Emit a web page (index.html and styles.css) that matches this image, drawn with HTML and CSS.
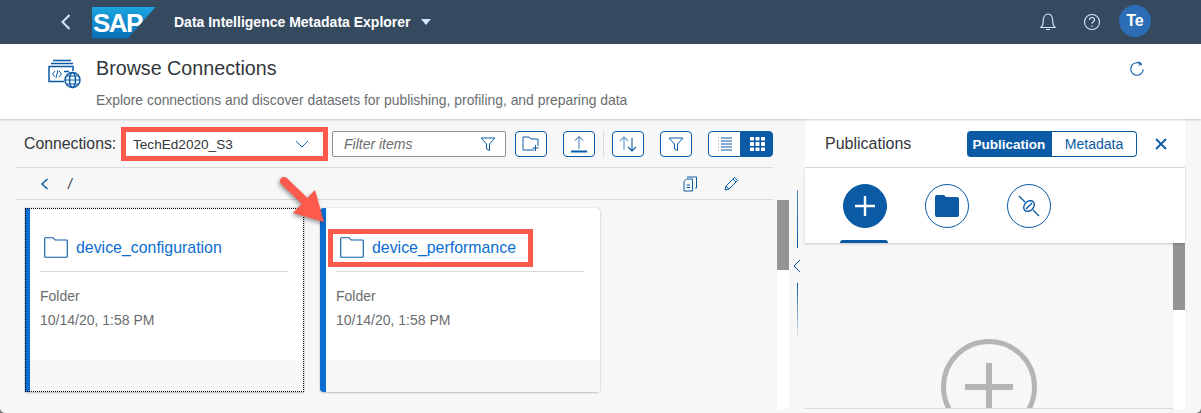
FILE: index.html
```html
<!DOCTYPE html>
<html lang="en">
<head>
  <meta charset="UTF-8" />
  <title>Browse Connections</title>
  <link rel="stylesheet" href="styles.css">
</head>
<body>
  <header class="shell">
    <svg class="back" width="12" height="18" viewBox="0 0 12 18"><path d="M9.500 2 2.500 9l7 7" fill="none" stroke="#d1e8ff" stroke-width="2"/></svg>
    <div class="logo">SAP</div>
    <div class="app-title">Data Intelligence Metadata Explorer</div>
    <span class="caret"></span>
    <div class="spacer"></div>
    <svg class="bell" width="18" height="20" viewBox="0 0 18 20"><path d="M2 15.500c1.800-1.600 2.200-3 2.200-5.500C4.200 6 5.500 2 9 2s4.800 4 4.800 8c0 2.500.4 3.900 2.200 5.500zM7.500 17.500h3" fill="none" stroke="#d1e8ff" stroke-width="1.200" stroke-linecap="round"/></svg>
    <svg class="help" width="18" height="18" viewBox="0 0 18 18"><circle cx="9" cy="9" r="7.500" fill="none" stroke="#d1e8ff" stroke-width="1.100"/><path d="M6.500 7c0-1.500 1.100-2.500 2.500-2.500s2.500 1 2.500 2.300c0 2-2.500 2-2.500 4" fill="none" stroke="#d1e8ff" stroke-width="1.200"/><circle cx="9" cy="13.300" r=".8" fill="#d1e8ff"/></svg>
    <div class="avatar">Te</div>
  </header>

  <section class="page-head">
    <svg class="page-icon" width="34" height="32" viewBox="0 0 34 32">
      <g fill="none" stroke="#0a5aa5" stroke-width="1.500">
        <path d="M5 1.500h18M3 4.500h22"/>
        <path d="M25 12v-4.500H1v15h15"/>
        <circle cx="24.500" cy="21" r="7.500" fill="#fff"/>
        <ellipse cx="24.500" cy="21" rx="3" ry="7.500"/>
        <path d="M17 21h15M18.500 17h12M18.500 25h12" stroke-width="1"/>
        <path d="M7 12l-2.500 3 2.500 3M11 12l2.500 3-2.500 3M10 11l-2 8" stroke-width="1"/>
        <path d="M16 12.500h5"/>
      </g>
    </svg>
    <div class="page-text">
      <h1>Browse Connections</h1>
      <p>Explore connections and discover datasets for publishing, profiling, and preparing data</p>
    </div>
    <svg class="refresh" width="16" height="17" viewBox="0 0 16 17"><path d="M12.500 4.500A6.300 6.300 0 1 0 14.300 9.500" fill="none" stroke="#0a5aa5" stroke-width="1.100"/><path d="M9.500 1.500 12.800 4.200 9.500 5.200" fill="none" stroke="#0a5aa5" stroke-width="1"/></svg>
  </section>

  <main class="workspace">
    <section class="browser">
      <div class="toolbar">
        <span class="conn-label">Connections:</span>
        <div class="conn-select">
          <span>TechEd2020_S3</span>
          <svg width="14" height="8" viewBox="0 0 14 8"><path d="M1 1l6 6 6-6" fill="none" stroke="#0a6ed1" stroke-width="1"/></svg>
        </div>
        <div class="filter-input">
          <span>Filter items</span>
          <svg width="16" height="15" viewBox="0 0 16 15"><path d="M1 1h14L9.500 7v6.500l-3-1.500V7z" fill="none" stroke="#0a5aa5" stroke-width="1"/></svg>
        </div>
        <button class="tool new-folder"><svg width="18" height="16" viewBox="0 0 18 16"><path d="M12 14H1V1h6l2 2h7v7M13.500 9v6M10.500 12h6" fill="none" stroke="#0a5aa5" stroke-width="1"/></svg></button>
        <button class="tool upload"><svg width="16" height="18" viewBox="0 0 16 18"><path d="M8 14V2" stroke="#7fa9d1" stroke-width="1.500"/><path d="M4 5.500 8 1.500l4 4" fill="none" stroke="#0a5aa5" stroke-width="1"/><path d="M0 16.500h16" stroke="#0a5aa5" stroke-width="2"/></svg></button>
        <span class="tool-sep"></span>
        <button class="tool"><svg width="20" height="18" viewBox="0 0 20 18"><path d="M6 15V2M2 6l4-4 4 4" fill="none" stroke="#7fa9d1" stroke-width="1.400"/><path d="M14 3v13M10 12l4 4 4-4" fill="none" stroke="#0a5aa5" stroke-width="1.100"/></svg></button>
        <button class="tool filter-btn"><svg width="16" height="15" viewBox="0 0 16 15"><path d="M1 1h14L9.500 7v6.500l-3-1.500V7z" fill="none" stroke="#0a5aa5" stroke-width="1"/></svg></button>
        <div class="view-toggle">
          <button class="view-btn"><svg width="14" height="14" viewBox="0 0 14 14"><path d="M3 1h11M3 4h11M3 7h11M3 10h11M3 13h11" stroke="#0a5aa5" stroke-width="1"/><path d="M0 1h1M0 4h1M0 7h1M0 10h1M0 13h1" stroke="#7fa9d1" stroke-width="1"/></svg></button>
          <button class="view-btn is-on"><svg width="15" height="14" viewBox="0 0 15 14" fill="#fff"><rect width="4" height="3.500" rx=".5"/><rect x="5.500" width="4" height="3.500" rx=".5"/><rect x="11" width="4" height="3.500" rx=".5"/><rect y="5" width="4" height="4" rx=".5"/><rect x="5.500" y="5" width="4" height="4" rx=".5"/><rect x="11" y="5" width="4" height="4" rx=".5"/><rect y="10.500" width="4" height="3.500" rx=".5"/><rect x="5.500" y="10.500" width="4" height="3.500" rx=".5"/><rect x="11" y="10.500" width="4" height="3.500" rx=".5"/></svg></button>
        </div>
      </div>

      <div class="crumbs">
        <svg class="crumb-back" width="9" height="12" viewBox="0 0 9 12"><path d="M7.500 1 2 6l5.500 5" fill="none" stroke="#0a5aa5" stroke-width="1.500"/></svg>
        <span class="crumb-path">/</span>
        <div class="spacer"></div>
        <svg class="crumb-copy" width="14" height="16" viewBox="0 0 14 16"><g fill="none" stroke="#0a5aa5" stroke-width="1"><path d="M1 5.500 3.500 3H9.500V15H1zM3.500 9h3.500M3.500 11.500h3.500"/><path d="M4 1h4.500M8.500 1h5v11h-1.500"/></g></svg>
        <svg class="crumb-edit" width="15" height="15" viewBox="0 0 15 15"><path d="M1 14l1-4L10.500 1.500l3 3L5 13zM2 10l3 3M9 3l3 3" fill="none" stroke="#0a5aa5" stroke-width="1"/></svg>
      </div>

      <div class="browser-body">
        <div class="cards">
          <article class="card is-focus">
            <div class="card-head">
              <svg class="folder" width="24" height="21" viewBox="0 0 24 21"><path d="M.7 19.500V1.500q0-.8.8-.8h7.500l2 2.300h11.500q.8 0 .8.8v15.700q0 .8-.8.8H1.500q-.8 0-.8-.8z" fill="none" stroke="#0a5aa5" stroke-width="1.100"/></svg>
              <a>device_configuration</a>
            </div>
            <div class="card-body">
              <div>Folder</div>
              <div>10/14/20, 1:58 PM</div>
            </div>
            <div class="card-foot"></div>
          </article>
          <article class="card">
            <div class="card-head">
              <span class="callout"></span>
              <svg class="folder" width="24" height="21" viewBox="0 0 24 21"><path d="M.7 19.500V1.500q0-.8.8-.8h7.500l2 2.300h11.500q.8 0 .8.8v15.700q0 .8-.8.8H1.500q-.8 0-.8-.8z" fill="none" stroke="#0a5aa5" stroke-width="1.100"/></svg>
              <a>device_performance</a>
            </div>
            <div class="card-body">
              <div>Folder</div>
              <div>10/14/20, 1:58 PM</div>
            </div>
            <div class="card-foot"></div>
          </article>
        </div>
        <div class="scrollbar browser-scroll"><div class="thumb"></div></div>
      </div>
    </section>

    <div class="sash">
      <span class="sash-line top"></span>
      <svg width="8" height="14" viewBox="0 0 8 14"><path d="M7 1 1 7l6 6" fill="none" stroke="#0a5aa5" stroke-width="1"/></svg>
      <span class="sash-line bottom"></span>
    </div>

    <aside class="side">
      <div class="side-head">
        <span class="side-title">Publications</span>
        <div class="seg">
          <button class="seg-btn is-on">Publication</button>
          <button class="seg-btn">Metadata</button>
        </div>
        <svg class="side-close" width="12" height="12" viewBox="0 0 12 12"><path d="M1 1l10 10M11 1 1 11" stroke="#0a5aa5" stroke-width="1.800"/></svg>
      </div>
      <div class="side-tabs">
        <div class="side-tab is-on">
          <svg width="24" height="24" viewBox="0 0 24 24"><path d="M12 2v20M2 12h20" stroke="#fff" stroke-width="2.400"/></svg>
        </div>
        <div class="side-tab">
          <svg width="24" height="22" viewBox="0 0 24 22"><path d="M0 2q0-2 2-2h7l2 2h11q2 0 2 2v16q0 2-2 2H2q-2 0-2-2z" fill="#0a5aa5"/></svg>
        </div>
        <div class="side-tab">
          <svg width="22" height="22" viewBox="0 0 22 22"><g fill="none" stroke="#0a5aa5" stroke-width="1.400"><path d="M1 1l6 6M15 15l6 6"/><ellipse cx="11" cy="11" rx="6" ry="4.500" transform="rotate(-45 11 11)"/><path d="M8 14l6-6"/></g></svg>
        </div>
      </div>
      <div class="side-body">
        <div class="side-empty">
          <svg class="empty-plus" width="96" height="96" viewBox="0 0 96 96"><circle cx="48" cy="48" r="45.500" fill="none" stroke="#b5b5b5" stroke-width="5"/><path d="M48 24v48M24 48h48" stroke="#b5b5b5" stroke-width="6"/></svg>
        </div>
        <div class="scrollbar side-scroll"><div class="thumb"></div></div>
      </div>
    </aside>
  </main>

  <svg class="arrow" width="60" height="60" viewBox="0 0 60 60">
    <path d="M5 11 L32 37" stroke="#fd5a4e" stroke-width="8" stroke-linecap="round"/>
    <path d="M45 52 L36 20 L14 43z" fill="#fd5a4e"/>
  </svg>
</body>
</html>
```

FILE: styles.css
```css
* {
  box-sizing: border-box;
}

html {
  background: #6f6f6f;
}

body {
  margin: 0;
  width: 1201px;
  height: 413px;
  overflow: hidden;
  position: relative;
  background: #f7f7f7;
  border-radius: 0 0 5px 5px;
  font-family: 'Liberation Sans', Arial, sans-serif;
  color: #32363a;
}

button {
  font-family: inherit;
  padding: 0;
  cursor: pointer;
}

.spacer {
  flex: 1;
}

/* top bar */
.shell {
  height: 44px;
  background: #354a5f;
  display: flex;
  align-items: center;
}

.back {
  margin-left: 60px;
}

.logo {
  margin-left: 20px;
  margin-top: 1px;
  width: 64px;
  height: 32px;
  padding-left: 1px;
  background: linear-gradient(#1ba5e0, #0a6db5);
  clip-path: polygon(0 0, 100% 0, 56% 100%, 0 100%);
  color: #fff;
  font-size: 26px;
  font-weight: bold;
  letter-spacing: -1.500px;
  line-height: 32px;
}

.app-title {
  margin-left: 18px;
  color: #fff;
  font-size: 14px;
  font-weight: bold;
}

.caret {
  margin-left: 10px;
  width: 0;
  height: 0;
  border-left: 5px solid transparent;
  border-right: 5px solid transparent;
  border-top: 6px solid #d1e8ff;
}

.bell {
  margin-right: 26px;
}

.help {
  margin-right: 18px;
}

.avatar {
  width: 32px;
  height: 32px;
  margin-right: 50px;
  margin-top: -3px;
  border-radius: 50%;
  background: #2b6eb5;
  color: #fff;
  font-size: 16px;
  font-weight: bold;
  text-align: center;
  line-height: 32px;
}

/* page heading */
.page-head {
  height: 75px;
  background: #fff;
  display: flex;
  align-items: flex-start;
  box-shadow: 0 1px 2px rgba(0, 0, 0, 0.2);
  position: relative;
}

.page-icon {
  margin: 15px 0 0 48px;
}

.page-text {
  margin-left: 14px;
  flex: 1;
}

.page-text h1 {
  margin: 11px 0 0;
  font-size: 19.700px;
  font-weight: normal;
  line-height: 27px;
}

.page-text p {
  margin: 9px 0 0;
  font-size: 13.900px;
  line-height: 18px;
  color: #6a6d70;
}

.refresh {
  margin: 16px 56px 0 0;
}

/* main area */
.workspace {
  height: 294px;
  display: flex;
  align-items: flex-start;
}

.browser {
  width: 789px;
  padding-left: 16px;
}

.toolbar {
  height: 49px;
  padding: 2px 0 0 8px;
  margin-right: 16px;
  display: flex;
  align-items: center;
  border-bottom: 1px solid #d9d9d9;
}

.conn-label {
  font-size: 15.800px;
  width: 92px;
}

.conn-select {
  width: 207px;
  height: 34px;
  margin-left: 5px;
  padding: 0 14px 0 7px;
  display: flex;
  align-items: center;
  justify-content: space-between;
  background: #fff;
  border: 5px solid #fd5a4e;
  font-size: 13.600px;
}

.filter-input {
  width: 174px;
  height: 26px;
  margin-left: 4px;
  padding: 0 9px 0 11px;
  display: flex;
  align-items: center;
  justify-content: space-between;
  background: #fff;
  border: 1px solid #89919a;
  border-radius: 2px;
  font-size: 14px;
  font-style: italic;
  color: #6a6d70;
}

.tool {
  width: 32px;
  height: 26px;
  margin-left: 16px;
  display: flex;
  align-items: center;
  justify-content: center;
  background: #fff;
  border: 1px solid #0a5aa5;
  border-radius: 4px;
}

.new-folder {
  margin-left: 9px;
}

.tool-sep {
  width: 1px;
  height: 24px;
  margin: 0 8px;
  background: #d9d9d9;
}

.tool-sep + .tool {
  margin-left: 0;
}

.view-toggle {
  margin-left: 16px;
  display: flex;
}

.view-btn {
  width: 33px;
  height: 26px;
  display: flex;
  align-items: center;
  justify-content: center;
  background: #fff;
  border: 1px solid #0a5aa5;
  border-radius: 4px 0 0 4px;
}

.view-btn.is-on {
  width: 32px;
  background: #0a5aa5;
  border-radius: 0 4px 4px 0;
}

.crumbs {
  height: 32px;
  margin-right: 16px;
  display: flex;
  align-items: center;
  border-bottom: 1px solid #d9d9d9;
}

.crumb-back {
  margin-left: 24px;
}

.crumb-path {
  margin-left: 19px;
  font-size: 14px;
  font-style: italic;
}

.crumb-copy {
  margin-right: 27px;
}

.crumb-edit {
  margin-right: 34px;
}

.browser-body {
  height: 209px;
  display: flex;
}

.cards {
  flex: 1;
  padding: 8px 0 0 8px;
  display: flex;
  align-items: flex-start;
  gap: 16px;
}

.card {
  width: 280px;
  height: 184px;
  display: flex;
  flex-direction: column;
  background: #fff;
  border-left: 6px solid #0a6ed1;
  border-radius: 4px;
  box-shadow: 0 0 1px rgba(0, 0, 0, 0.35), 0 1px 2px rgba(0, 0, 0, 0.2);
  position: relative;
}

.card.is-focus {
  width: 279px;
  margin-left: 1px;
  border-left-width: 5px;
  border-radius: 0;
}

.card.is-focus::after {
  content: "";
  position: absolute;
  top: 0;
  right: 0;
  bottom: 0;
  left: -5px;
  border: 1px dotted #000;
}

.card-head {
  height: 64px;
  margin: 0 16px 0 10px;
  padding: 29px 0 0 4px;
  display: flex;
  align-items: flex-start;
  gap: 8px;
  border-bottom: 1px solid #d9d9d9;
  position: relative;
}

.card-head a {
  font-size: 15.900px;
  line-height: 22px;
  color: #0a6ed1;
}

.callout {
  position: absolute;
  top: 21px;
  left: -8px;
  width: 205px;
  height: 38px;
  border: 5px solid #fd5a4e;
}

.card-body {
  flex: 1;
  padding: 12px 0 0 10px;
  font-size: 14px;
  line-height: 24px;
  color: #6a6d70;
}

.card-foot {
  height: 32px;
  background: #f7f7f7;
}

.scrollbar {
  width: 12px;
  background: #fff;
}

.thumb {
  background: #949494;
}

.browser-scroll {
  height: 209px;
}

.browser-scroll .thumb {
  height: 70px;
}

.sash {
  width: 16px;
  height: 222px;
  margin-top: 71px;
  display: flex;
  flex-direction: column;
  align-items: center;
}

.sash-line {
  width: 1px;
}

.sash-line.top {
  height: 58px;
  background: linear-gradient(rgba(10, 90, 165, 0.7), #0a5aa5);
  margin-bottom: 11px;
}

.sash-line.bottom {
  height: 59px;
  background: linear-gradient(#0a5aa5, rgba(10, 90, 165, 0));
  margin-top: 10px;
}

.side {
  width: 380px;
}

.side-head {
  height: 49px;
  padding: 2px 18px 0 20px;
  display: flex;
  align-items: center;
  background: #fff;
  border-bottom: 1px solid #d9d9d9;
}

.side-title {
  font-size: 16px;
  width: 142px;
}

.seg {
  width: 170px;
  display: flex;
}

.seg-btn {
  width: 85px;
  height: 26px;
  background: #fff;
  border: 1px solid #0a5aa5;
  border-left: none;
  border-radius: 0 4px 4px 0;
  color: #0a5aa5;
  font-size: 14px;
}

.seg-btn.is-on {
  background: #0a5aa5;
  color: #fff;
  font-size: 13.500px;
  font-weight: bold;
  border-radius: 4px 0 0 4px;
}

.side-close {
  margin-left: 18px;
}

.side-tabs {
  height: 75px;
  padding: 16px 0 0 38px;
  display: flex;
  gap: 38px;
  background: #fff;
  box-shadow: 0 1px 2px rgba(0, 0, 0, 0.2);
  position: relative;
}

.side-tab {
  width: 44px;
  height: 44px;
  display: flex;
  align-items: center;
  justify-content: center;
  border: 1px solid #0a5aa5;
  border-radius: 50%;
}

.side-tab.is-on {
  background: #0a5aa5;
  position: relative;
}

.side-tab.is-on::after {
  content: "";
  position: absolute;
  left: -4px;
  bottom: -16px;
  width: 48px;
  height: 3px;
  background: #0a5aa5;
  border-radius: 3px 3px 0 0;
}

.side-body {
  height: 166px;
  display: flex;
}

.side-empty {
  flex: 1;
  height: 166px;
  padding: 96px 0 0 136px;
  overflow: hidden;
  border-bottom: 1px solid #d9d9d9;
}

.side-scroll {
  height: 166px;
}

.side-scroll .thumb {
  height: 67px;
}

/* annotation arrow */
.arrow {
  position: absolute;
  left: 279px;
  top: 170px;
  filter: drop-shadow(-1px 2px 2px rgba(0, 0, 0, 0.4));
}
```
